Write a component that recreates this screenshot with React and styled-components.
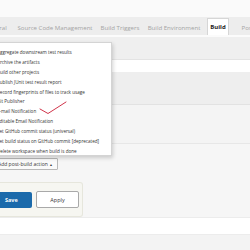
import React from 'react'
import styled, { createGlobalStyle } from 'styled-components'

const GlobalStyle = createGlobalStyle`
  html, body {
    margin: 0;
    padding: 0;
    width: 250px;
    height: 250px;
    overflow: hidden;
    background: #f3f3f3;
    font-family: "Open Sans", "Liberation Sans", sans-serif;
  }
`

const actions = [
  'Aggregate downstream test results',
  'Archive the artifacts',
  'Build other projects',
  'Publish JUnit test result report',
  'Record fingerprints of files to track usage',
  'Git Publisher',
  'E-mail Notification',
  'Editable Email Notification',
  'Set GitHub commit status (universal)',
  'Set build status on GitHub commit [deprecated]',
  'Delete workspace when build is done',
]

// widths picked so each label sits where the screenshot has it
const tabs = [
  { label: 'General', width: 31 },
  { label: 'Source Code Management', width: 88 },
  { label: 'Build Triggers', width: 42 },
  { label: 'Build Environment', width: 66 },
  { label: 'Build', width: 22, active: true },
  { label: 'Post-build Actions', width: 76 },
]

const App = () => {
  return (
    <>
      <GlobalStyle />
      <Page>
        <Header />
        <TabBar>
          {tabs.map((t) => (
            <Tab key={t.label} $active={t.active} $w={t.width}>
              {t.label}
            </Tab>
          ))}
        </TabBar>
        <Band $h={23} $bg="#efefef" $line="#e3e3e3" />
        <Band $h={12} $bg="#ffffff" />
        <Band $h={33} $bg="#eeeeee" $line="#e2e2e2" />
        <Band $h={39} $bg="#f4f4f4" $line="#e7e7e7" />
        <Band $h={38} $bg="#f6f6f6">
          <AddButton>
            Add post-build action <Caret>▴</Caret>
          </AddButton>
        </Band>
        <Band $h={36} $bg="#f6f6f6" $line="#ececec">
          <SaveBar>
            <SaveButton>Save</SaveButton>
            <ApplyButton>Apply</ApplyButton>
          </SaveBar>
        </Band>
        <Band $h={17} $bg="#ffffff" $line="#ececec" />
        <Band $h={14} $bg="#f3f3f3" />

        <Menu>
          {actions.map((a) => (
            <MenuItem key={a}>{a}</MenuItem>
          ))}
          <Check width="30" height="14" viewBox="0 0 30 14">
            <path
              d="M1 8 L9 12.5 L27 1"
              fill="none"
              stroke="#d0344a"
              strokeWidth="1"
              strokeLinecap="round"
              strokeLinejoin="round"
            />
          </Check>
        </Menu>
      </Page>
    </>
  )
}

const Page = styled.div`
  position: relative;
  width: 250px;
  height: 250px;
  overflow: hidden;
  display: flex;
  flex-direction: column;
`

const Header = styled.div`
  height: 17px;
  flex: none;
  background: #fafafa;
`

const TabBar = styled.div`
  height: 18px;
  flex: none;
  display: flex;
  align-items: stretch;
  background: #ededed;
  border-bottom: 2px solid #fbfbfb;
  margin-left: -20px;
`

const Tab = styled.div`
  flex: none;
  width: ${(p) => p.$w}px;
  display: flex;
  align-items: center;
  justify-content: center;
  font-size: ${(p) => (p.$active ? 6 : 6.1)}px;
  white-space: nowrap;
  color: ${(p) => (p.$active ? '#222' : '#a4a4a4')};
  font-weight: ${(p) => (p.$active ? 700 : 400)};
  background: ${(p) => (p.$active ? '#ffffff' : 'transparent')};
  border: 1px solid ${(p) => (p.$active ? '#d6d6d6' : 'transparent')};
  border-bottom: none;
  box-sizing: border-box;
  margin-top: 1px;
`

const Band = styled.div`
  height: ${(p) => p.$h}px;
  flex: none;
  box-sizing: border-box;
  background: ${(p) => p.$bg};
  border-bottom: ${(p) => (p.$line ? `1px solid ${p.$line}` : 'none')};
  display: flex;
  align-items: center;
`

const AddButton = styled.div`
  margin-left: -8px;
  margin-top: 2px;
  height: 12px;
  box-sizing: border-box;
  padding: 0 5px 0 5px;
  display: flex;
  align-items: center;
  gap: 2px;
  font-size: 5px;
  color: #333;
  background: #fafafa;
  border: 1px solid #b8b8b8;
  border-radius: 1px;
`

const Caret = styled.span`
  font-size: 4px;
`

const SaveBar = styled.div`
  margin-left: -10px;
  width: 93px;
  height: 35px;
  box-sizing: border-box;
  display: flex;
  align-items: center;
  gap: 4px;
  padding-left: 4px;
  background: #f6f6f1;
  border: 1px solid #e6e6dc;
  border-left: none;
  border-radius: 0 3px 3px 0;
`

const SaveButton = styled.div`
  width: 38px;
  height: 16px;
  box-sizing: border-box;
  padding-left: 11px;
  display: flex;
  align-items: center;
  font-size: 5.5px;
  font-weight: 700;
  color: #fff;
  background: #1b6aab;
  border-radius: 2px;
`

const ApplyButton = styled.div`
  width: 43px;
  height: 17px;
  box-sizing: border-box;
  display: flex;
  align-items: center;
  justify-content: center;
  font-size: 5.5px;
  color: #333;
  background: #fff;
  border: 1px solid #a9a9a9;
  border-radius: 2px;
`

const Menu = styled.div`
  position: absolute;
  left: -14px;
  top: 42px;
  width: 126px;
  height: 114px;
  box-sizing: border-box;
  padding-top: 5px;
  background: #fff;
  border: 1px solid #d4d4d4;
  box-shadow: 1px 2px 4px rgba(0, 0, 0, 0.18);
`

const MenuItem = styled.div`
  height: 9.9px;
  line-height: 9.9px;
  padding-left: 10px;
  font-size: 4.6px;
  color: #333;
  white-space: nowrap;
`

const Check = styled.svg`
  position: absolute;
  left: 52px;
  top: 58px;
`

export default App
